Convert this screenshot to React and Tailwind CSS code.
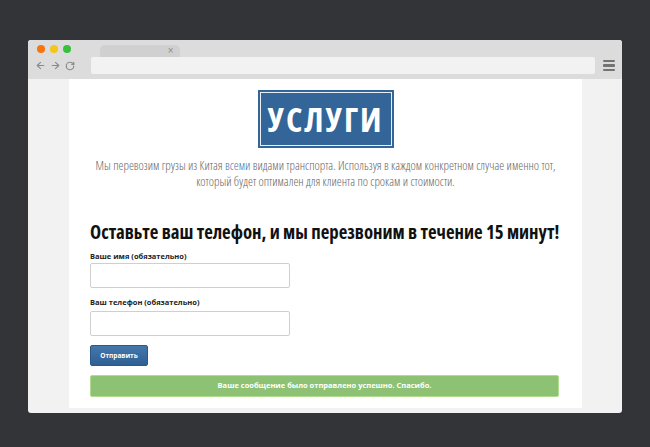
import React from 'react';
import { ArrowLeft, ArrowRight, RotateCw } from 'lucide-react';

const condensed = { fontFamily: '"Open Sans", "Liberation Sans Narrow", sans-serif', fontStretch: 'condensed' };

function Chrome() {
  return (
    <div className="h-[39px] shrink-0 bg-[#dcdcdc] flex flex-col">
      <div className="h-[17px] flex items-start">
        <div className="flex gap-[5px] pl-[9px] pt-[5px]">
          <span className="w-[8px] h-[8px] rounded-full bg-[#f7730e]" />
          <span className="w-[8px] h-[8px] rounded-full bg-[#f5c518]" />
          <span className="w-[8px] h-[8px] rounded-full bg-[#35c13a]" />
        </div>
        <div className="ml-[29px] mt-[5px] w-[80px] h-[12px] bg-[#d0d0d0] rounded-t-[5px] flex items-center justify-end pr-[6px]">
          <span className="text-[8px] leading-none text-[#8a8a8a]" style={{ fontFamily: '"DejaVu Sans", sans-serif' }}>×</span>
        </div>
      </div>
      <div className="h-[17px] flex items-center">
        <div className="flex items-center gap-[4px] pl-[7px] w-[63px] text-[#8a8a8a]">
          <ArrowLeft size={11} strokeWidth={2.5} />
          <ArrowRight size={11} strokeWidth={2.5} />
          <RotateCw size={10} strokeWidth={2.8} />
        </div>
        <div className="w-[504px] h-[17px] bg-[#f2f2f2] rounded-[2px]" />
        <div className="ml-[8px] flex flex-col gap-[2px]">
          <span className="w-[12px] h-[2.5px] bg-[#737373] rounded-[1px]" />
          <span className="w-[12px] h-[2.5px] bg-[#737373] rounded-[1px]" />
          <span className="w-[12px] h-[2.5px] bg-[#737373] rounded-[1px]" />
        </div>
      </div>
    </div>
  );
}

function Logo() {
  return (
    <div className="flex justify-center pt-[11px]">
      <div className="w-[136px] h-[58px] bg-[#336598] p-[2px]">
        <div className="w-full h-full border border-[#e8eef5] flex items-center justify-center">
          <span className="text-white font-bold text-[34px] leading-none tracking-[2px]" style={condensed}>
            УСЛУГИ
          </span>
        </div>
      </div>
    </div>
  );
}

export default function App() {
  return (
    <div className="w-full h-[447px] bg-[#333438] pt-[40px] pl-[28px]">
      <div className="w-[594px] h-[373px] bg-[#f2f2f2] rounded-[3px] overflow-hidden flex flex-col">
        <Chrome />
        <div className="flex-1 min-h-0 pl-[41px] pb-[5px]">
          <div className="w-[513px] h-full bg-white overflow-hidden">
            <Logo />
            <p className="mt-[10px] text-center text-[12.5px] leading-[16px] text-[#666] font-light" style={condensed}>
              Мы перевозим грузы из Китая <span className="text-[#3f72b0]">всеми</span> видами транспорта. Используя в каждом конкретном случае именно тот,
              <br />
              который будет оптимален для клиента по срокам и стоимости.
            </p>
            <div className="pl-[21px] pr-[23px]">
              <h2 className="mt-[31px] text-[18.8px] leading-[22px] font-bold text-[#111] text-center whitespace-nowrap" style={condensed}>
                Оставьте ваш телефон, и мы перезвоним в течение 15 минут!
              </h2>
              <div style={{ fontFamily: '"Open Sans", sans-serif' }}>
                <label className="block mt-[8px] text-[7.5px] leading-[10px] font-bold text-[#222]">Ваше имя (обязательно)</label>
                <div className="mt-[2px] w-[200px] h-[25px] border border-[#cfcfcf] rounded-[2px] bg-white" />
                <label className="block mt-[9px] text-[7.5px] leading-[10px] font-bold text-[#222]">Ваш телефон (обязательно)</label>
                <div className="mt-[4px] w-[200px] h-[25px] border border-[#cfcfcf] rounded-[2px] bg-white" />
                <button className="block mt-[9px] w-[58px] h-[21px] rounded-[2px] bg-gradient-to-b from-[#4477ac] to-[#2f5f93] border border-[#2c5888] text-white text-[6.5px] font-bold">
                  Отправить
                </button>
                <div className="mt-[9px] h-[22px] rounded-[2px] bg-[#8dc275] border border-[#b1dc8f] flex items-center justify-center text-white text-[7.5px] font-bold">
                  Ваше сообщение было отправлено успешно. Спасибо.
                </div>
              </div>
            </div>
          </div>
        </div>
      </div>
    </div>
  );
}
